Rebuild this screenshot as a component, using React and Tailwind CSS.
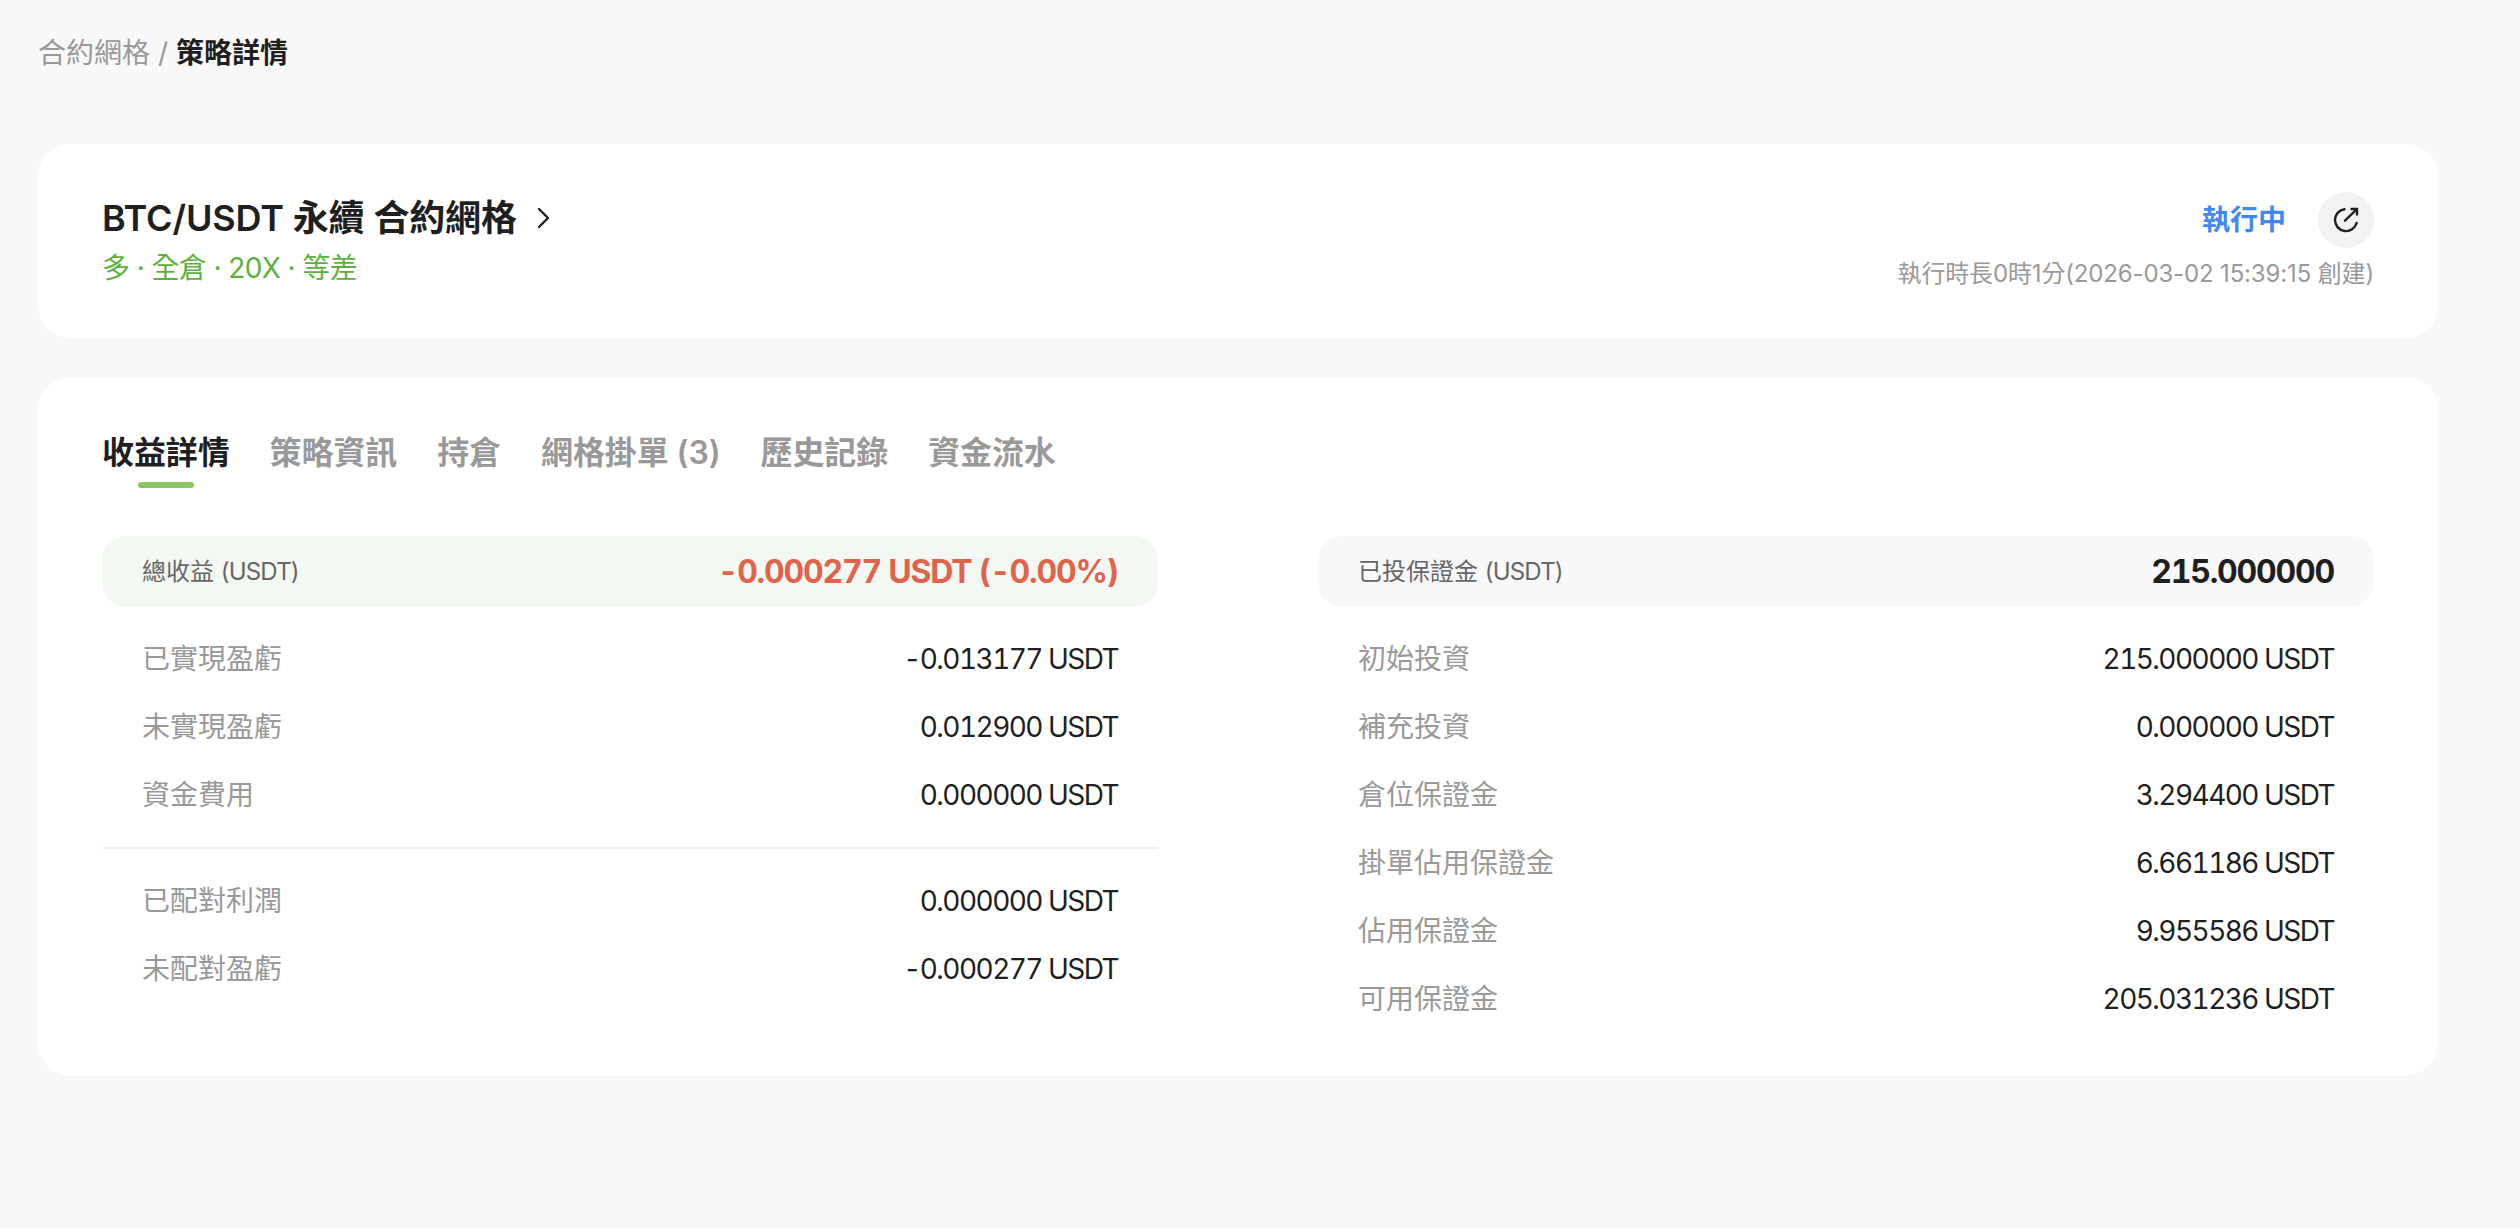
const FONT = "font-['Inter','Noto_Sans_CJK_TC',sans-serif]";

function Row({ label, value }) {
  return (
    <div className="flex h-[44px] items-center justify-between px-[40px] text-[28px] leading-[44px]">
      <span className="text-[#999999]">{label}</span>
      <span className="tabular-nums tracking-[-1.55px] text-[#1f1f1f]">{value}</span>
    </div>
  );
}

function Header({ label, unit, value, bg, valueClass }) {
  return (
    <div className={`flex h-[71px] items-center justify-between rounded-[24px] px-[40px] ${bg}`}>
      <span className="text-[24px] text-[#666666]">
        {label} <span className="tracking-[-0.8px]">{unit}</span>
      </span>
      <span className={`text-[32px] font-bold tabular-nums tracking-[-1.2px] ${valueClass}`}>{value}</span>
    </div>
  );
}

const tabs = ["收益詳情", "策略資訊", "持倉", "網格掛單 (3)", "歷史記錄", "資金流水"];

export default function App() {
  return (
    <div className={`${FONT} min-h-screen bg-[#f8f8f8] pl-[38px] pr-[82px] pt-[31px]`}>
      <div className="flex h-[44px] items-center text-[28px] leading-[44px]">
        <span className="text-[#999999]">合約網格</span>
        <span className="mx-[8px] text-[#999999]">/</span>
        <span className="font-semibold text-[#1f1f1f]">策略詳情</span>
      </div>

      <div className="mt-[69px] flex h-[194px] items-start justify-between rounded-[32px] bg-white px-[64px] pt-[48px]">
        <div>
          <div className="flex h-[52px] items-center">
            <span className="text-[36px] font-semibold leading-[52px] tracking-[-0.15px] text-[#1f1f1f]">BTC/USDT 永續 合約網格</span>
            <svg className="ml-[14px]" width="24" height="24" viewBox="0 0 24 24" fill="none" stroke="#1f1f1f" strokeWidth="2.4" strokeLinecap="round" strokeLinejoin="round">
              <path d="M8 3l9 9-9 9" />
            </svg>
          </div>
          <div className="mt-[6px] flex items-center text-[28px] leading-[36px] tracking-[-0.6px] text-[#5cb13e]">多 · 全倉 · 20X · 等差</div>
        </div>
        <div className="flex flex-col items-end">
          <div className="flex items-center">
            <span className="text-[28px] font-semibold text-[#4387f6]">執行中</span>
            <div className="ml-[32px] flex h-[56px] w-[56px] items-center justify-center rounded-full bg-[#f2f2f2]">
              <svg width="28" height="28" viewBox="0 0 28 28" fill="none" stroke="#1f1f1f" strokeWidth="2.4" strokeLinecap="round" strokeLinejoin="round">
                <path d="M12.5 3.2A11 11 0 1 0 24.6 17" />
                <path d="M13 14.7L25 3" />
                <path d="M19.5 3H25v5.5" />
              </svg>
            </div>
          </div>
          <div className="mt-[8px] text-[24px] leading-[36px] tracking-[-0.15px] text-[#999999]">執行時長0時1分(2026-03-02 15:39:15 創建)</div>
        </div>
      </div>

      <div className="mt-[40px] h-[697px] rounded-[32px] bg-white px-[64px] pt-[53px]">
        <div className="flex gap-[40px]">
          {tabs.map((t, i) => (
            <div key={t} className="relative">
              <span className={`block text-[32px] font-semibold leading-[44px] tracking-[-0.1px] ${i === 0 ? "text-[#1f1f1f]" : "text-[#999999]"}`}>{t}</span>
              {i === 0 && (
                <span className="absolute left-1/2 top-[51px] h-[6px] w-[56px] -translate-x-1/2 rounded-full bg-[#8bc663]" />
              )}
            </div>
          ))}
        </div>

        <div className="mt-[61px] grid grid-cols-[1056px_1056px] justify-between">
          <div>
            <Header label="總收益" unit="(USDT)" value="-0.000277 USDT (-0.00%)" bg="bg-[#f4f8f3]" valueClass="text-[#e0634b]" />
            <div className="mt-[30px] flex flex-col gap-[24px]">
              <Row label="已實現盈虧" value="-0.013177 USDT" />
              <Row label="未實現盈虧" value="0.012900 USDT" />
              <Row label="資金費用" value="0.000000 USDT" />
            </div>
            <div className="mb-[30px] mt-[30px] h-[2px] bg-[#f0f0f0]" />
            <div className="flex flex-col gap-[24px]">
              <Row label="已配對利潤" value="0.000000 USDT" />
              <Row label="未配對盈虧" value="-0.000277 USDT" />
            </div>
          </div>
          <div>
            <Header label="已投保證金" unit="(USDT)" value="215.000000" bg="bg-[#f8f8f8]" valueClass="text-[#1f1f1f]" />
            <div className="mt-[30px] flex flex-col gap-[24px]">
              <Row label="初始投資" value="215.000000 USDT" />
              <Row label="補充投資" value="0.000000 USDT" />
              <Row label="倉位保證金" value="3.294400 USDT" />
              <Row label="掛單佔用保證金" value="6.661186 USDT" />
              <Row label="佔用保證金" value="9.955586 USDT" />
              <Row label="可用保證金" value="205.031236 USDT" />
            </div>
          </div>
        </div>
      </div>
    </div>
  );
}
